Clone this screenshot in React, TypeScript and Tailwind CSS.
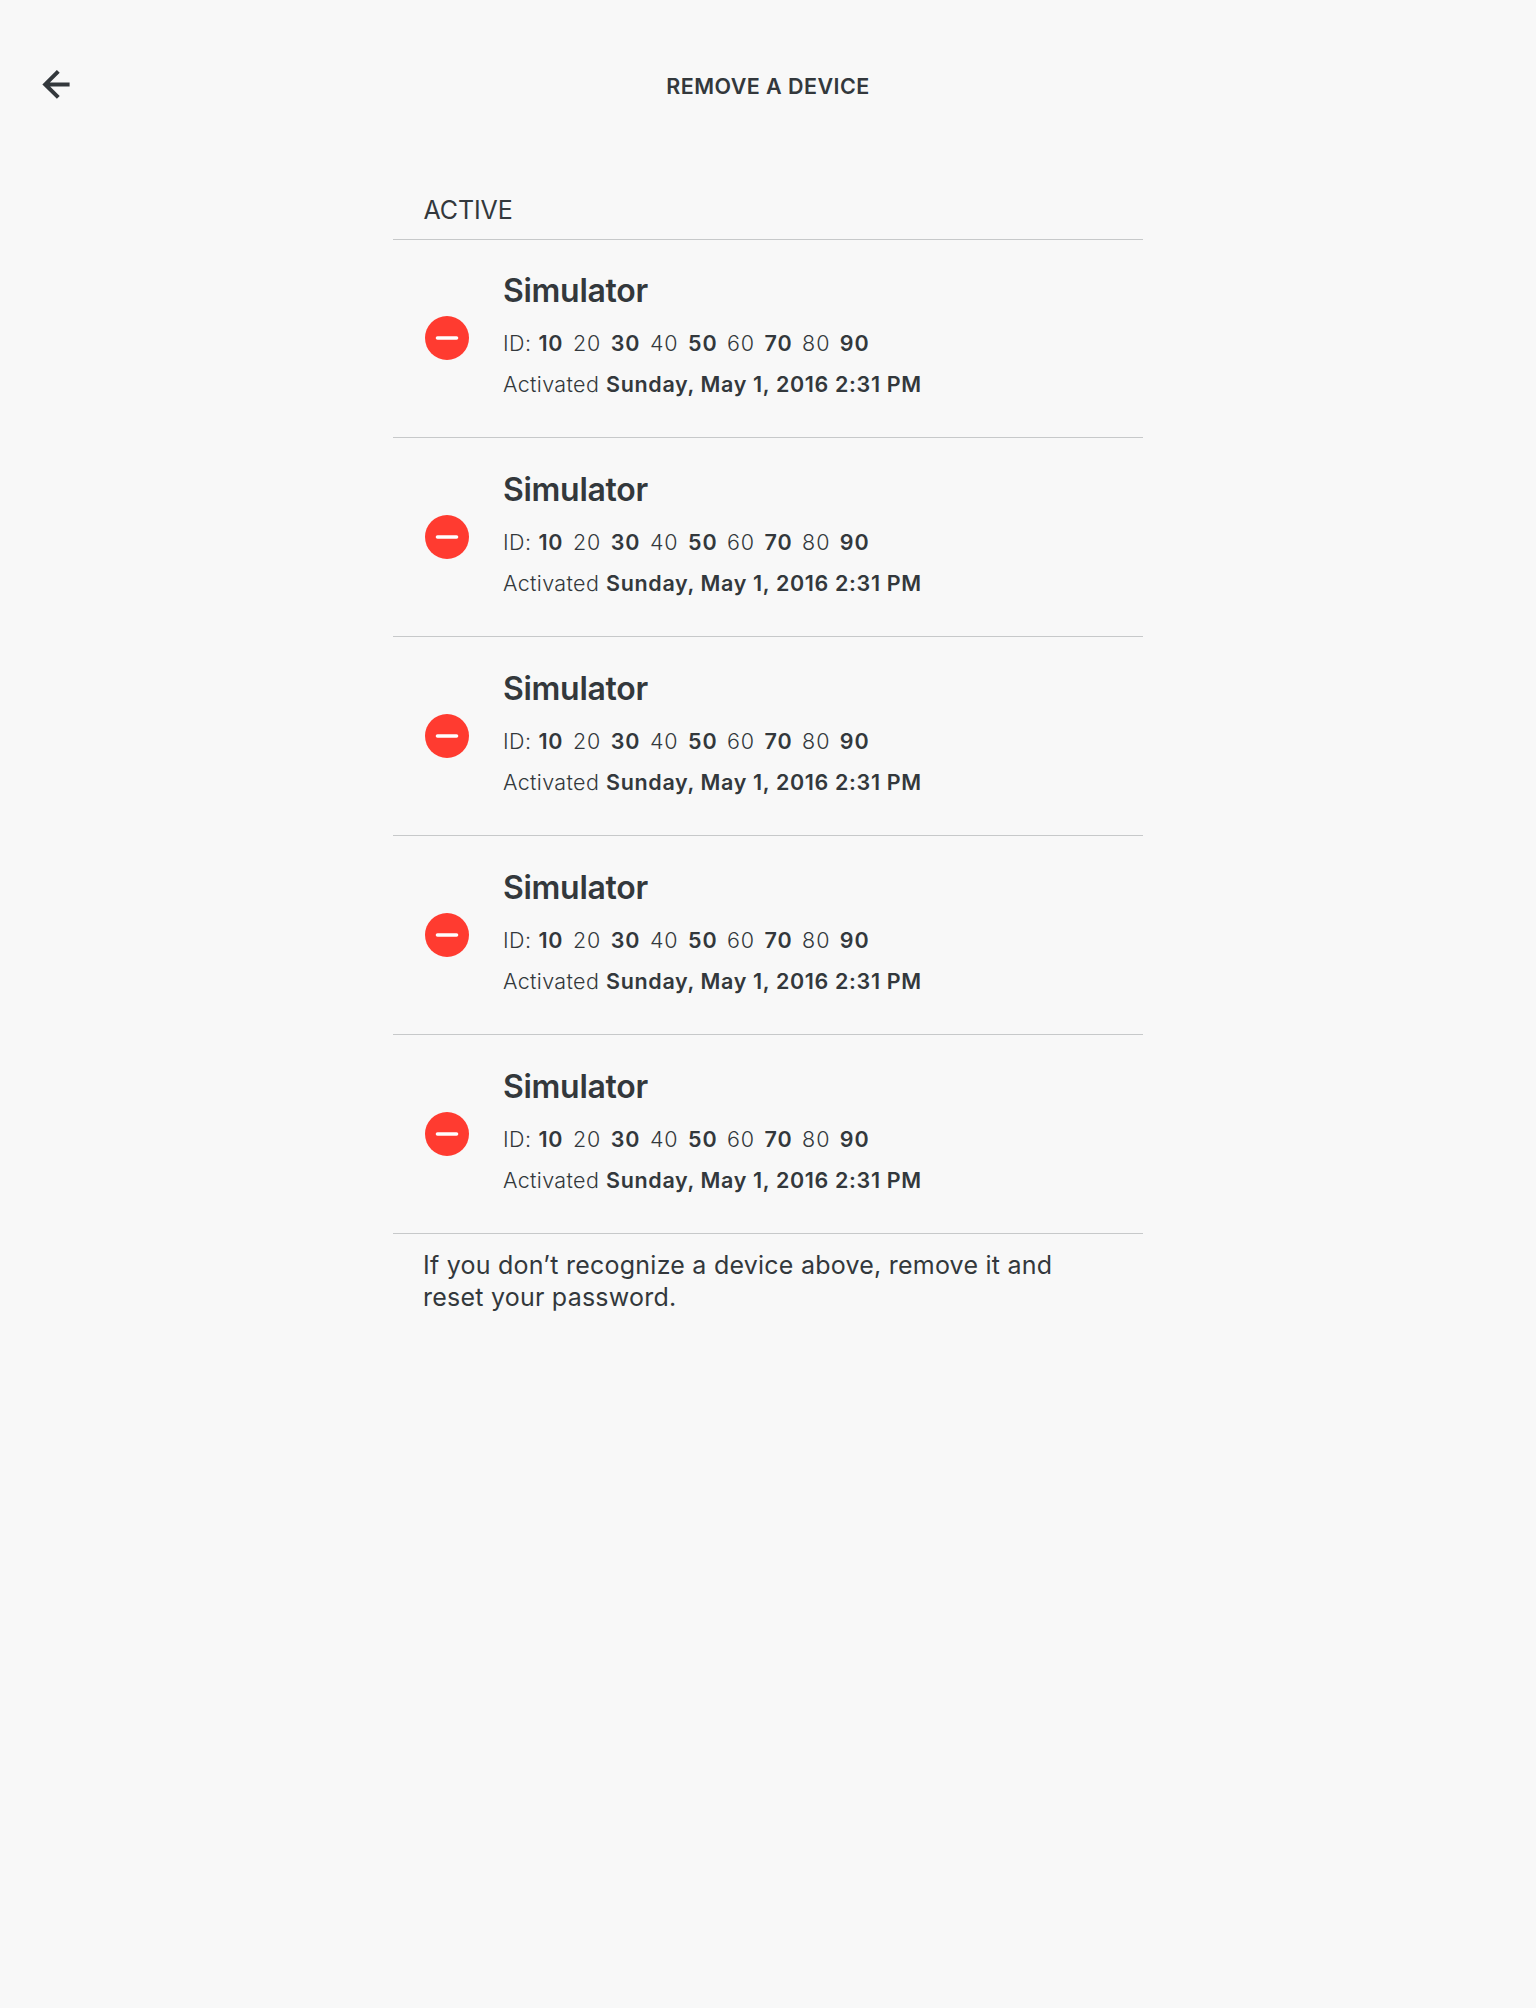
const devices = [1, 2, 3, 4, 5];
const parts = ["10", "20", "30", "40", "50", "60", "70", "80", "90"];

function Device() {
  return (
    <li className="flex h-[199px] border-b border-[#c7c9ca]">
      <svg className="ml-8 mt-[77px] size-11 shrink-0" viewBox="0 0 44 44">
        <circle cx="22" cy="22" r="22" fill="#ff3b30" />
        <path d="M12.5 22H31.5" stroke="#fff" strokeWidth="3.6" strokeLinecap="round" />
      </svg>
      <div className="ml-[34px] whitespace-nowrap">
        <h2 className="mt-[32px] text-[32px] leading-10 font-semibold tracking-[-0.3px]">Simulator</h2>
        <p className="mt-[12px] flex text-[21.5px] leading-[41px] font-light tracking-[0.9px]">
          <span className="mr-[7px] tracking-[0.4px]">ID:</span>
          {parts.map((p, i) => (
            <span key={p} className={i % 2 ? "mr-[9.5px]" : "mr-[9.5px] font-semibold"}>{p}</span>
          ))}
        </p>
        <p className="text-[21.5px] leading-[41px] font-light tracking-[0.35px]">
          Activated <span className="ml-[0.5px] font-semibold tracking-[0.65px]">Sunday, May 1, 2016 2:31 PM</span>
        </p>
      </div>
    </li>
  );
}

export default function App() {
  return (
    <main className="min-h-[2008px] bg-[#f8f8f8] font-['Inter',sans-serif] text-[#33383c]">
      <header className="grid h-[172px] grid-cols-[1fr_auto_1fr]">
        <svg className="ml-[42px] mt-[70px] h-[29px] w-7" viewBox="0 0 28 29" fill="none" stroke="#33383c" strokeWidth="4">
          <path d="M27.6 14.4H3M16.3 1.4L3.2 14.4L16.3 27.4" />
        </svg>
        <h1 className="mt-[71px] text-[21.5px] leading-[30px] font-semibold tracking-[0.45px]">REMOVE A DEVICE</h1>
      </header>
      <section className="mx-auto w-[750px]">
        <h2 className="h-[68px] border-b border-[#c7c9ca] pl-[30.5px] pt-[20px] text-[25px] leading-[36px] tracking-[-0.1px]">ACTIVE</h2>
        <ul className="-mt-px">{devices.map((d) => <Device key={d} />)}</ul>
        <p className="pl-[30px] pt-[15px] text-[25px] leading-8 tracking-[0.23px]">
          If you don’t recognize a device above, remove it and
          <br />
          reset your password.
        </p>
      </section>
    </main>
  );
}
